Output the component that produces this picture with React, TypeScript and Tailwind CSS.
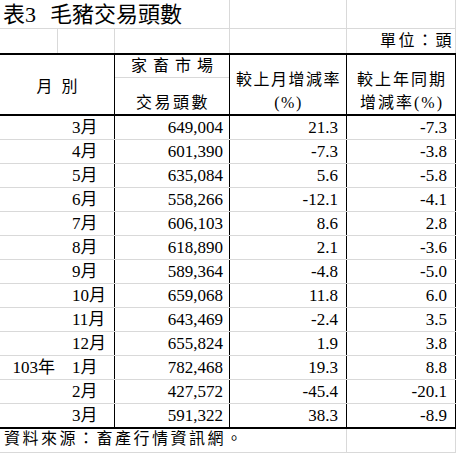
import React from 'react'

const rows = [
  { year: '', month: '3月', count: '649,004', mom: '21.3', yoy: '-7.3' },
  { year: '', month: '4月', count: '601,390', mom: '-7.3', yoy: '-3.8' },
  { year: '', month: '5月', count: '635,084', mom: '5.6', yoy: '-5.8' },
  { year: '', month: '6月', count: '558,266', mom: '-12.1', yoy: '-4.1' },
  { year: '', month: '7月', count: '606,103', mom: '8.6', yoy: '2.8' },
  { year: '', month: '8月', count: '618,890', mom: '2.1', yoy: '-3.6' },
  { year: '', month: '9月', count: '589,364', mom: '-4.8', yoy: '-5.0' },
  { year: '', month: '10月', count: '659,068', mom: '11.8', yoy: '6.0' },
  { year: '', month: '11月', count: '643,469', mom: '-2.4', yoy: '3.5' },
  { year: '', month: '12月', count: '655,824', mom: '1.9', yoy: '3.8' },
  { year: '103年', month: '1月', count: '782,468', mom: '19.3', yoy: '8.8' },
  { year: '', month: '2月', count: '427,572', mom: '-45.4', yoy: '-20.1' },
  { year: '', month: '3月', count: '591,322', mom: '38.3', yoy: '-8.9' },
]

export default function App() {
  return (
    <div className="w-[456px] h-[453px] bg-white text-black overflow-hidden font-['Liberation_Serif','Noto_Sans_CJK_TC',serif]">
      {/* title row */}
      <div className="flex h-[29px] border-b border-[#d9d9d9]">
        <div className="w-[230px] border-r border-[#d9d9d9] pl-[3px] pt-[1px] text-[22px] leading-[28px] whitespace-nowrap">
          表3<span className="ml-[14px]">毛豬交易頭數</span>
        </div>
        <div className="w-[117px] border-r border-[#d9d9d9]" />
        <div className="w-[109px] border-r border-[#d9d9d9]" />
      </div>

      {/* unit row */}
      <div className="flex h-[24px]">
        <div className="w-[58px] border-r border-[#d9d9d9]" />
        <div className="w-[57px] border-r border-[#d9d9d9]" />
        <div className="w-[115px] border-r border-[#d9d9d9]" />
        <div className="w-[117px] border-r border-[#d9d9d9]" />
        <div className="w-[109px] border-r border-[#d9d9d9] text-right text-[16px] leading-[24px] tracking-[2.5px] pr-[1px]">
          單位：頭
        </div>
      </div>

      {/* header */}
      <div className="flex h-[63px] border-t-2 border-b-2 border-black text-[16px]">
        <div className="w-[115px] border-r border-black flex items-center justify-center gap-[9px] pt-[4px]">
          <span>月</span>
          <span>別</span>
        </div>
        <div className="w-[115px] border-r border-black flex flex-col">
          <div className="h-[23px] border-b border-[#d9d9d9] flex items-center justify-center tracking-[6px] pl-[6px]">
            家畜市場
          </div>
          <div className="flex-1 flex items-end justify-center tracking-[2.5px] pl-[2px] leading-[23px]">
            交易頭數
          </div>
        </div>
        <div className="w-[117px] border-r border-black flex flex-col justify-end items-center leading-[23px] tracking-[1.5px] pl-[1px]">
          <div>較上月增減率</div>
          <div>(%)</div>
        </div>
        <div className="w-[109px] border-r border-black flex flex-col justify-end items-center leading-[23px] tracking-[2px] pl-[2px]">
          <div>較上年同期</div>
          <div>增減率(%)</div>
        </div>
      </div>

      {/* data */}
      <div className="border-b-2 border-black text-[17px]">
        {rows.map((r, i) => (
          <div
            key={i}
            className={
              i === rows.length - 1
                ? 'flex h-[23px] leading-[23px]'
                : 'flex h-[24px] leading-[23px] border-b border-[#d9d9d9]'
            }
          >
            <div className="w-[58px] text-right pr-[3px]">{r.year}</div>
            <div className="w-[57px] border-r border-black pl-[14px]">{r.month}</div>
            <div className="w-[115px] border-r border-black text-right pr-[6px]">{r.count}</div>
            <div className="w-[117px] border-r border-black text-right pr-[8px]">{r.mom}</div>
            <div className="w-[109px] border-r border-black text-right pr-[8px]">{r.yoy}</div>
          </div>
        ))}
      </div>

      {/* footer */}
      <div className="flex h-[24px] border-b border-[#d9d9d9]">
        <div className="w-[347px] border-r border-[#d9d9d9] pl-[4px] text-[16px] leading-[20px] tracking-[2.5px] whitespace-nowrap">
          資料來源：畜產行情資訊網。
        </div>
        <div className="w-[109px] border-r border-[#d9d9d9]" />
      </div>
    </div>
  )
}
